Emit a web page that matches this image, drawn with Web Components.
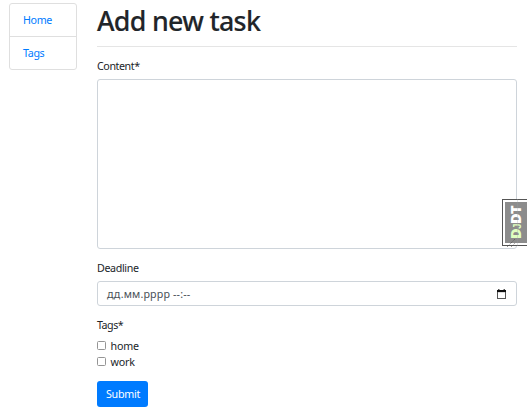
<!DOCTYPE html>
<html lang="en"><head><meta charset="utf-8"><title>Add new task</title>
<style>
body{margin:0;background:#fff;color:#212529;font:10.7px/16px "Noto Sans","Open Sans",sans-serif;height:420px;overflow:hidden}
</style></head><body>
<task-page>
<side-nav slot="nav"><nav-item>Home</nav-item><nav-item>Tags</nav-item></side-nav>
<page-title>Add new task</page-title>
<form-field label="Content*" style="--ls:-.42px"><text-area></text-area></form-field>
<form-field label="Deadline" style="--ls:-.36px"><date-input>дд.мм.рррр --:--</date-input></form-field>
<form-field label="Tags*" style="--ls:-.5px"><check-option>home</check-option><check-option>work</check-option></form-field>
<submit-button>Submit</submit-button>
</task-page>
<debug-handle></debug-handle>
<script>
function define(name, html){
  customElements.define(name, class extends HTMLElement{
    connectedCallback(){
      if(this.shadowRoot) return;
      const t=document.createElement('template');
      t.innerHTML='<style>*{box-sizing:border-box}:host{display:block;box-sizing:border-box}</style>'+html;
      this.attachShadow({mode:'open'}).append(t.content.cloneNode(true));
      const l=this.shadowRoot.querySelector('label');
      if(l&&this.hasAttribute('label')) l.textContent=this.getAttribute('label');
    }
  });
}
define('task-page',`<style>:host{display:grid;grid-template-columns:68px 420px;column-gap:20px;padding:3px 0 0 9px;align-items:start}main{display:flow-root}</style><slot name="nav"></slot><main><slot></slot></main>`);
define('side-nav',`<style>:host{border:1px solid #dfdfdf;border-radius:3px;height:67px;overflow:hidden}</style><slot></slot>`);
define('nav-item',`<style>:host{height:32px;padding:8px 13px;color:#007bff;letter-spacing:-.35px}:host(:first-child){height:33px;border-bottom:1px solid #dfdfdf}</style><slot></slot>`);
define('page-title',`<style>:host{height:44px;padding-top:1px;border-bottom:1px solid #e5e5e5}h1{margin:0;font-size:26.8px;line-height:34px;font-weight:500;letter-spacing:-.7px;-webkit-text-stroke:.15px #212529;white-space:nowrap}</style><h1><slot></slot></h1>`);
define('form-field',`<style>:host{margin-top:11px}label{display:block;height:16px;margin-bottom:5px;letter-spacing:var(--ls)}</style><label></label><slot></slot>`);
define('text-area',`<style>:host{height:170px;border:1px solid #ced4da;border-radius:3px}</style>`);
define('date-input',`<style>:host{height:25px;border:1px solid #ced4da;border-radius:3px;display:flex;align-items:center;justify-content:space-between;padding:0 10px 0 9px;color:#495057;letter-spacing:.15px}svg{display:block}</style><span><slot></slot></span><svg width="9" height="10" viewBox="0 0 9 10"><path d="M1 0h1.5v1h4V0H8v1h1v9H0V1h1z" fill="#555"/><path d="M0 1h9v2H0z" fill="#111"/><path d="M1 3.2h7V9H1z" fill="#fff"/></svg>`);
define('check-option',`<style>:host{display:flex;align-items:center;height:16px;gap:4px;letter-spacing:-.18px}i{width:9px;height:9px;border:1px solid #959595;border-radius:1.5px;background:#fff;position:relative;top:-.5px}span{padding-left:.5px}</style><i></i><span><slot></slot></span>`);
define('submit-button',`<style>:host{width:51px;margin-top:11px}button{display:block;width:51px;height:26px;border:0;border-radius:3px;background:#007bff;color:#fff;font:inherit;padding:0 0 0 1px;letter-spacing:-.25px}</style><button><slot></slot></button>`);
define('debug-handle',`<style>:host{position:absolute;left:502px;top:199px;width:25px;height:47px;border:1px solid #555;border-right:0;background:#fff;padding:2px 0 2px 2px}div{height:41px;background:#8c8c8c;display:flex;align-items:center;justify-content:center;padding-right:1px}span{writing-mode:vertical-rl;text-orientation:sideways;transform:rotate(180deg);font:800 14.5px/18px "Open Sans",sans-serif;color:#fff;letter-spacing:-.6px}b{color:#dfffc0;font-weight:inherit}small{font:bold 10px "Liberation Sans",sans-serif}svg{position:absolute;left:4px;top:39px}i{position:absolute;left:14px;top:-1px;width:1px;height:47px;background:#9aa0a844}</style><div><span><b>D<small>J</small></b>DT</span></div><i></i><svg width="10" height="9" viewBox="0 0 10 9"><path d="M0 8L8 0M4 8l4-4" stroke="#444" stroke-width=".8" stroke-dasharray="1 1"/></svg>`);
</script></body></html>
